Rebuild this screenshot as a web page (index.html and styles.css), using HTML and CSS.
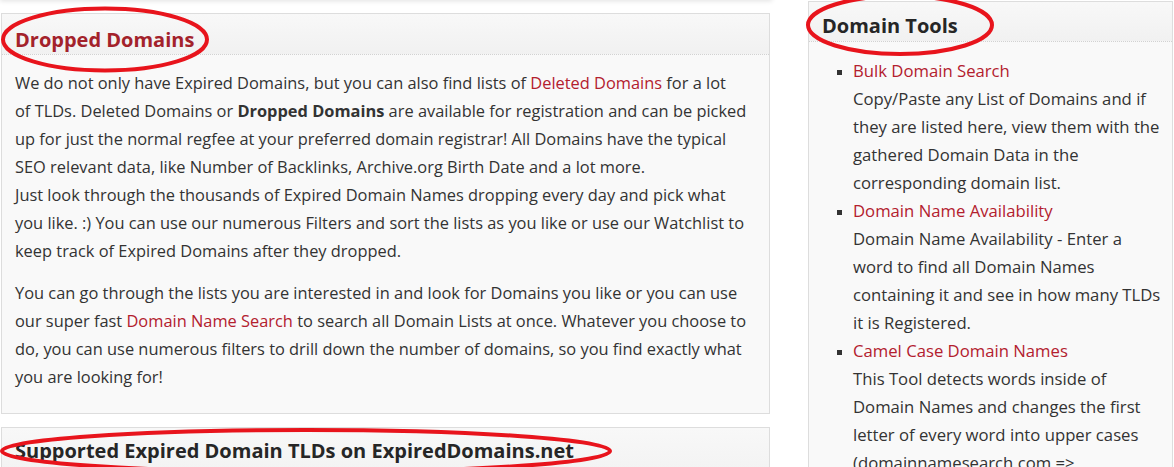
FILE: index.html
```html
<!DOCTYPE html>
<html lang="en">
<head>
    <meta charset="UTF-8">
    <title>Expired Domains</title>
    <link rel="stylesheet" href="styles.css">
</head>
<body>
    <div class="top-shadow"></div>
    <div class="layout">
        <div class="main-col">
            <div class="panel panel-intro">
                <div class="panel-head">
                    <h2 class="title-red">Dropped Domains</h2>
                </div>
                <div class="panel-body">
                    <p>We do not only have Expired Domains, but you can also find lists of <a href="#">Deleted Domains</a> for a lot<br>
                    of TLDs. Deleted Domains or <b>Dropped Domains</b> are available for registration and can be picked<br>
                    up for just the normal regfee at your preferred domain registrar! All Domains have the typical<br>
                    SEO relevant data, like Number of Backlinks, Archive.org Birth Date and a lot more.<br>
                    Just look through the thousands of Expired Domain Names dropping every day and pick what<br>
                    you like. :) You can use our numerous Filters and sort the lists as you like or use our Watchlist to<br>
                    keep track of Expired Domains after they dropped.</p>
                    <p>You can go through the lists you are interested in and look for Domains you like or you can use<br>
                    our super fast <a href="#">Domain Name Search</a> to search all Domain Lists at once. Whatever you choose to<br>
                    do, you can use numerous filters to drill down the number of domains, so you find exactly what<br>
                    you are looking for!</p>
                </div>
            </div>

            <div class="panel panel-tlds">
                <div class="panel-head">
                    <h2>Supported Expired Domain TLDs on ExpiredDomains.net</h2>
                </div>
            </div>
        </div>

        <div class="side-col">
            <div class="panel panel-tools">
                <div class="panel-head">
                    <h2>Domain Tools</h2>
                </div>
                <div class="panel-body">
                    <ul class="tool-list">
                        <li>
                            <a href="#">Bulk Domain Search</a><br>
                            Copy/Paste any List of Domains and if they are listed here, view them with the gathered Domain Data in the corresponding domain list.
                        </li>
                        <li>
                            <a href="#">Domain Name Availability</a><br>
                            Domain Name Availability - Enter a word to find all Domain Names containing it and see in how many TLDs it is Registered.
                        </li>
                        <li>
                            <a href="#">Camel Case Domain Names</a><br>
                            This Tool detects words inside of Domain Names and changes the first letter of every word into upper cases (domainnamesearch.com =&gt; DomainNameSearch.com)
                        </li>
                    </ul>
                </div>
            </div>
        </div>
    </div>

    <!-- annotation marks drawn over the screenshot -->
    <svg class="marks" width="1174" height="467" viewBox="0 0 1174 467">
        <ellipse cx="105" cy="39.5" rx="102" ry="31" />
        <ellipse cx="900" cy="25" rx="92" ry="29" />
        <ellipse cx="306" cy="451" rx="304" ry="21" />
    </svg>
</body>
</html>
```

FILE: styles.css
```css
* {
    margin: 0;
    padding: 0;
    box-sizing: border-box;
}

body {
    position: relative;
    width: 1174px;
    height: 467px;
    overflow: hidden;
    background-color: #fff;
    font-family: "Open Sans", "Noto Sans", sans-serif;
    font-size: 16.7px;
    line-height: 28px;
    color: #333;
}

a {
    color: #b3202e;
    text-decoration: none;
}

.top-shadow {
    position: absolute;
    top: -10px;
    left: 0;
    width: 772px;
    height: 10px;
    box-shadow: 0 1px 5px rgba(0,0,0,0.12);
}

.layout {
    display: flex;
    padding-left: 1px;
}

.main-col {
    width: 769px;
    padding-top: 13px;
}

.side-col {
    width: 365px;
    margin-left: 38px;
    padding-top: 1px;
}

.panel {
    background-color: #f9f9f9;
    border: 1px solid #ddd;
}

.panel-head {
    background: linear-gradient(#f8f8f8, #f1f1f1);
    border-bottom: 1px dotted #d2d2d2;
    padding: 0 13px;
}

.panel-head h2 {
    font-size: 20px;
    font-weight: bold;
    color: #262626;
    line-height: 28px;
}

.panel-head .title-red {
    color: #a3222b;
}

.panel-intro .panel-head {
    height: 41px;
    padding-top: 12px;
}

.panel-body {
    padding: 14px 13px 22px;
}

.panel-intro .panel-body {
    font-size: 16.4px;
    padding-right: 4px;
    white-space: nowrap;
}

.panel-body p + p {
    margin-top: 14px;
}

.panel-tlds {
    margin-top: 13px;
}

.panel-tlds .panel-head {
    border-bottom: none;
    padding-top: 9px;
    height: 60px;
}

.panel-tools .panel-head {
    height: 40px;
    padding-top: 10px;
}

.panel-tools .panel-body {
    padding: 15px 10px 0 44px;
}

.tool-list {
    list-style: square;
}

.tool-list li::marker {
    font-size: 13px;
}

.marks {
    position: absolute;
    top: 0;
    left: 0;
    pointer-events: none;
}

.marks ellipse {
    fill: none;
    stroke: #e8141c;
    stroke-width: 4;
}
```
